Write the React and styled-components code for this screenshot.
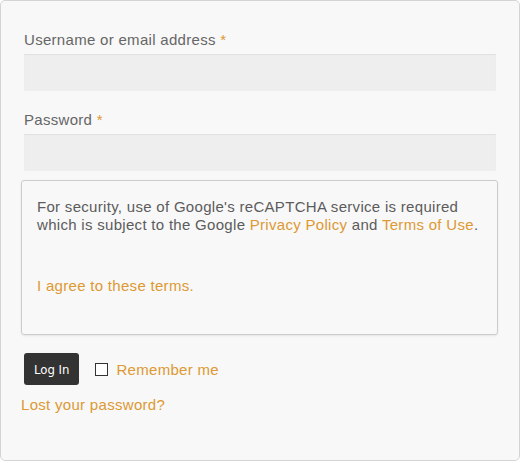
import React from "react";
import styled, { createGlobalStyle } from "styled-components";

const Global = createGlobalStyle`
  html, body {
    margin: 0;
    padding: 0;
    background: #ffffff;
  }
  body {
    font-family: "Liberation Sans", Arial, sans-serif;
  }
`;

const Panel = styled.form`
  box-sizing: border-box;
  width: 520px;
  height: 461px;
  background: #f8f8f8;
  border: 1px solid #d4d4d4;
  border-radius: 5px;
  padding: 29px 23px 0 20px;
  display: flex;
  flex-direction: column;
`;

const Field = styled.div`
  display: flex;
  flex-direction: column;
  padding-left: 3px;
  margin-bottom: ${(p) => p.gap || 0}px;
`;

const Label = styled.label`
  font-size: 15px;
  line-height: 20px;
  color: #666666;
  letter-spacing: 0.3px;
  margin-bottom: 4px;
`;

const Required = styled.span`
  color: #dd9933;
`;

const Input = styled.input`
  box-sizing: border-box;
  height: 37px;
  width: 472px;
  background: #eeeeee;
  border: none;
  box-shadow: inset 0 1px 1px rgba(0, 0, 0, 0.06);
  outline: none;
`;

const Notice = styled.div`
  box-sizing: border-box;
  width: 477px;
  height: 155px;
  margin-top: 9px;
  border: 1px solid #cccccc;
  border-radius: 3px;
  box-shadow: 0 1px 2px rgba(0, 0, 0, 0.08);
  padding: 17px 15px 0;
  font-size: 15px;
  line-height: 18px;
  color: #5c5c5c;
  letter-spacing: 0.3px;
`;

const Link = styled.a`
  color: #dd9933;
  text-decoration: none;
`;

const Agree = styled.p`
  margin: 43px 0 0;
`;

const Actions = styled.div`
  display: flex;
  align-items: center;
  margin-top: 18px;
  padding-left: 3px;
`;

const Button = styled.button`
  height: 32px;
  padding: 0 10px;
  background: #333333;
  color: #ffffff;
  border: none;
  border-radius: 3px;
  font-family: "DejaVu Sans Condensed", "DejaVu Sans", sans-serif;
  font-size: 13px;
  cursor: pointer;
`;

const Remember = styled.label`
  display: flex;
  align-items: center;
  margin-left: 16px;
  font-size: 15px;
  color: #dd9933;
  letter-spacing: 0.3px;
`;

const Box = styled.span`
  box-sizing: border-box;
  width: 13px;
  height: 13px;
  border: 1px solid #333333;
  background: #ffffff;
  margin-right: 8px;
`;

const Lost = styled.a`
  margin-top: 11px;
  font-size: 15px;
  color: #dd9933;
  letter-spacing: 0.3px;
  text-decoration: none;
`;

export default function App() {
  return (
    <>
      <Global />
      <Panel onSubmit={(e) => e.preventDefault()}>
        <Field gap={19}>
          <Label>
            Username or email address <Required>*</Required>
          </Label>
          <Input type="text" />
        </Field>
        <Field>
          <Label>
            Password <Required>*</Required>
          </Label>
          <Input type="password" />
        </Field>
        <Notice>
          For security, use of Google's reCAPTCHA service is required which is
          subject to the Google <Link href="#">Privacy Policy</Link> and{" "}
          <Link href="#">Terms of Use</Link>.
          <Agree>
            <Link href="#">I agree to these terms.</Link>
          </Agree>
        </Notice>
        <Actions>
          <Button type="submit">Log In</Button>
          <Remember>
            <Box />
            Remember me
          </Remember>
        </Actions>
        <Lost href="#">Lost your password?</Lost>
      </Panel>
    </>
  );
}
